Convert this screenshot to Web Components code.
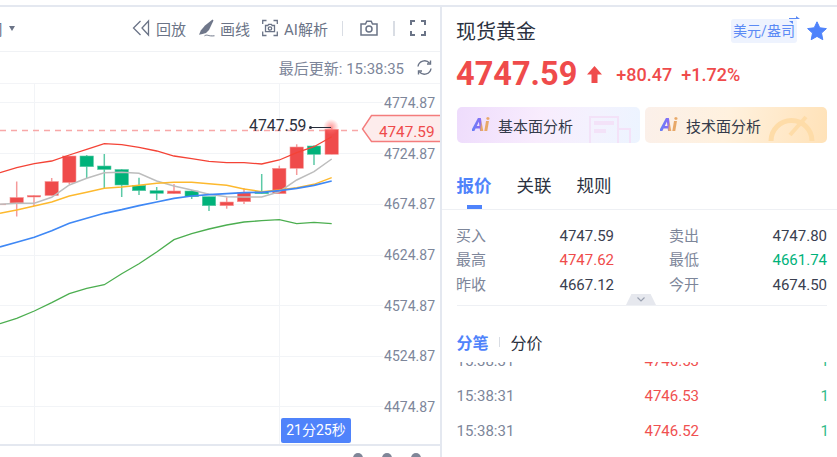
<!DOCTYPE html>
<html lang="zh"><head><meta charset="utf-8"><title>现货黄金</title>
<style>
html,body{margin:0;padding:0;background:#fff;overflow:hidden}
body{width:837px;height:457px;font-family:Roboto,"Noto Sans CJK SC",sans-serif}
</style></head><body>
<app-shell>
  <chart-pane slot="left">
    <chart-toolbar></chart-toolbar>
    <update-bar></update-bar>
    <kline-chart></kline-chart>
    <chart-foot></chart-foot>
  </chart-pane>
  <quote-pane slot="right">
    <quote-head></quote-head>
    <ai-row></ai-row>
    <tab-bar></tab-bar>
    <quote-table></quote-table>
    <trade-list></trade-list>
  </quote-pane>
</app-shell>
<script>
const FONT='Roboto,"Noto Sans CJK SC",sans-serif';
function def(name,css,html,after){
  customElements.define(name,class extends HTMLElement{
    constructor(){super();const s=this.attachShadow({mode:'open'});
      s.innerHTML='<style>'+css+'</style>'+html;if(after)after(s,this);}
  });
}
def('app-shell',
 `:host{display:block;width:837px;height:457px;overflow:hidden;font-family:${FONT};padding-top:5px;box-sizing:border-box}
  .strip{height:2px;background:#e4e8f0}
  .cols{display:grid;grid-template-columns:440px 397px;height:450px}`,
 `<div class="strip"></div><div class="cols"><slot name="left"></slot><slot name="right"></slot></div>`);
def('chart-pane',`:host{display:flex;flex-direction:column;height:450px;overflow:hidden}`,`<slot></slot>`);
def('chart-toolbar',
 `:host{display:flex;align-items:center;height:42px;padding-bottom:2px;border-bottom:1px solid #f0f2f5;color:#6b7487;font-size:15px;white-space:nowrap;overflow:hidden;flex:none}
  .period{margin-left:-12px;width:15px;overflow:hidden;font-size:15px;color:#6b7487}
  .tri{width:0;height:0;border:3.5px solid transparent;border-top:5px solid #6b7487;border-bottom:0;margin-left:6px;margin-right:117px}
  svg{display:block;flex:none}
  .t{display:block}
  .sep{width:1px;height:15px;background:#d9dde4;flex:none}`,
 `<span class="period">周期</span><i class="tri"></i>
  <svg width="18" height="18" viewBox="0 0 18 18" fill="none" stroke="#6b7487" stroke-width="1.3"><path d="M8.5 2 L1.5 9 L8.5 16"/><path d="M16.500 2 L10 9 L16.500 16 Z"/></svg>
  <span class="t" style="margin-left:6px">回放</span>
  <svg style="margin-left:12px" width="17" height="18" viewBox="0 0 17 18"><path d="M14.500 .5 L15.500 1.500 L11 11 L8 14 L4.500 15 L1 15.800 L2.800 11.500 L7 6.500 Z" fill="#6f778a"/><path d="M6.500 16.800 C10 15 9.500 17.500 16.500 16.800" fill="none" stroke="#6f778a" stroke-width="1"/></svg>
  <span class="t" style="margin-left:5px">画线</span>
  <svg style="margin-left:12px" width="16" height="18" viewBox="0 0 16 18" fill="none" stroke="#6b7487" stroke-width="1.3"><path d="M.7 5V1.500H4.500M11.500 1.500H15.300V5M.7 12.500V16.500H4.500M11.500 16.500H15.300V12.500"/><path d="M3.500 6.500H5.800L6.600 5.300H9.400L10.200 6.500H12.500V12.700H3.500Z"/><circle cx="8" cy="9.500" r="1.700"/></svg>
  <span class="t" style="margin-left:6px">AI解析</span>
  <i class="sep" style="margin-left:14px"></i>
  <svg style="margin-left:17px" width="18" height="16" viewBox="0 0 18 16" fill="none" stroke="#6b7487" stroke-width="1.5"><path d="M1 4H5.500L6.800 1.200H11.200L12.500 4H17V15H1Z"/><circle cx="9" cy="9" r="3"/></svg>
  <i class="sep" style="margin-left:15px;width:2px"></i>
  <svg style="margin-left:15px" width="16" height="16" viewBox="0 0 16 16" fill="none" stroke="#6b7487" stroke-width="2"><path d="M1 5V1H5M11 1H15V5M1 11V15H5M11 15H15V11"/></svg>`);
def('update-bar',
 `:host{display:flex;align-items:center;justify-content:flex-end;height:31px;border-bottom:1px solid #f3f4f7;color:#7d869a;font-size:15px;flex:none;padding-right:7px;box-sizing:content-box}
  svg{margin-left:12px;display:block}`,
 `<span>最后更新: 15:38:35</span>
  <svg width="17" height="17" viewBox="0 0 17 17" fill="none" stroke="#6b7487" stroke-width="1.400"><path d="M2 7.500A6.600 6.600 0 0 1 13.600 4.200"/><path d="M15 9.500A6.600 6.600 0 0 1 3.400 12.800"/><path d="M14.500 1.500V5H11"/><path d="M2.500 15.500V12H6"/></svg>`);
def('kline-chart',
 `:host{display:block;height:360px;flex:none;position:relative;overflow:hidden;font-family:Roboto,sans-serif}
  svg{display:block;position:absolute;left:0;top:0}
  text{font-family:Roboto,sans-serif}
  .cd{position:absolute;left:281px;top:334px;width:70px;height:25px;background:#4f83fb;border-radius:2px;color:#fff;font:14px/25px ${FONT};text-align:center;white-space:nowrap}`,
 `<svg id="c" width="440" height="360" viewBox="0 84 440 360"></svg><div class="cd">21分25秒</div>`,
 (s)=>{
  const z=a=>a.map(p=>(p[0]/3).toFixed(1)+','+(p[1]/3).toFixed(1)).join(' ');
  const xs=[0,50,103,155,208,260,313,365,417,470,522,575,627,680,732,785,838,890,942,995];
  const mk=ys=>z(xs.map((x,i)=>[x,ys[i]]));
  const red=[518,503,491,483,465,448,431,434,442,453,468,476,484,488,488,492,480,458,440,410];
  const gray=[613,610,610,592,555,535,518,517,520,543,558,570,583,590,591,591,575,540,515,477];
  const yel=[640,630,618,606,588,577,565,561,556,550,547,547,551,556,567,575,570,563,553,533];
  const blue=[741,727,712,692,670,655,640,629,617,606,595,588,584,581,578,577,572,565,556,543];
  const grn=[971,955,933,908,881,865,854,821,791,756,719,701,687,675,666,662,659,671,667,671];
  let h='';
  for(const y of [102.5,153.5,204.5,255.5,305.500,356.500,406.500]) h+=`<line x1="0" x2="383" y1="${y}" y2="${y}" stroke="#f2f4f7"/>`;
  for(const x of [34.5,279.5]) h+=`<line x1="${x}" x2="${x}" y1="84" y2="444" stroke="#f2f4f7"/>`;
  h+=`<line x1="0" x2="362" y1="130.500" y2="130.500" stroke="#f8a8a8" stroke-width="1.300" stroke-dasharray="6 5"/>`;
  const C=[
   [-1,204,204.8,204,205,1],[16.7,197.5,203,181.5,216.5,1],[34,195.5,197,195,206,1],[51.7,181.5,195.5,178,195.5,1],
   [69.3,156,182.5,156,184,1],[86.7,156,166.7,155,178,0],[104.3,166,169.5,154,188,0],[121.7,169.5,185,169,197,0],
   [139,185.3,190.7,177.7,195,0],[156.7,190.7,193.3,187,200,0],[174,191,193.7,184,194,1],[191.7,191,196.7,190,199,0],
   [209,196.7,205.7,196.7,211,0],[226.7,202,205.7,197.3,208.7,1],[244,192.700,201.700,188,204,1],[261.7,191.700,193.700,174,193.700,0],
   [279.3,168.300,193.700,165.700,194,1],[296.7,147,168.300,144.300,175,1],[314,146,154.300,145.300,165,0],[331.7,129.300,154.300,127.300,154.300,1]];
  for(const [x,t,b,wt,wb,up] of C){
    const col=up?'#ef4b4b':'#00b27a',lt=up?'#f59a9a':'#5cc9a6';
    h+=`<line x1="${x}" x2="${x}" y1="${wt}" y2="${wb}" stroke="${lt}" stroke-width="1.500"/>`;
    h+=`<rect x="${x-6.7}" y="${t}" width="13.400" height="${b-t}" fill="${col}" stroke="${lt}" stroke-width=".6"/>`;
  }
  const L=(ys,c,w)=>`<polyline points="${mk(ys)}" fill="none" stroke="${c}" stroke-width="${w}"/>`;
  h+=L(gray,'#bdbdbd',1.5)+L(yel,'#fdb92e',1.4)+L(blue,'#3f88f5',1.7)+L(grn,'#4cae50',1.3)+L(red,'#f44336',1.3);
  h+=`<defs><radialGradient id="g"><stop offset="0" stop-color="#f77" stop-opacity=".75"/><stop offset="1" stop-color="#f77" stop-opacity="0"/></radialGradient></defs><circle cx="331" cy="127" r="8" fill="url(#g)"/>`;
  h+=`<line x1="310" x2="331" y1="127.500" y2="127.500" stroke="#262c3a"/><circle cx="310.500" cy="127.500" r="1.500" fill="#262c3a"/>`;
  h+=`<text x="306.500" y="131" text-anchor="end" font-size="15.800" fill="#2b3140">4747.59</text>`;
  h+=`<path d="M441 115.500H371.500L362.500 129L371.500 141.500H441" fill="#fdecec" stroke="#f47c7c" stroke-width="1.400"/>`;
  h+=`<text x="434.500" y="137" text-anchor="end" font-size="15.300" fill="#ef4b4b">4747.59</text>`;
  for(const [y,t] of [[108,'4774.87'],[159,'4724.87'],[209,'4674.87'],[260,'4624.87'],[311,'4574.87'],[361,'4524.87'],[412,'4474.87']])
    h+=`<text x="435" y="${y}" text-anchor="end" font-size="14" fill="#7d869a">${t}</text>`;
  s.getElementById('c').innerHTML=h;
 });
def('chart-foot',
 `:host{display:block;flex:none;height:12px;border-top:2px solid #e4e8f0;box-sizing:content-box;overflow:hidden}
  .r{display:flex;gap:19px;padding:7px 0 0 353px}
  i{display:block;width:10px;height:10px;border-radius:50%;background:#7f8698}`,
 `<div class="r"><i></i><i></i><i></i></div>`);
def('quote-pane',
 `:host{display:flex;flex-direction:column;height:450px;border-left:2px solid #e4e8f0;box-sizing:border-box;overflow:hidden;color:#262c3a}`,`<slot></slot>`);
def('quote-head',
 `:host{display:block;padding:0 10px 0 14px;flex:none}
  .a{display:flex;align-items:center;height:48px}
  .title{font-size:20px;flex:1;color:#2b3140;position:relative;top:-1px}
  .badge{position:relative;width:66px;height:24px;line-height:24px;background:#eef3fe;border-radius:3px;color:#5b8af5;font-size:14px;text-align:center;margin-right:10px;white-space:nowrap}
  .sw{position:absolute;right:-3px;top:-3px;display:block}
  .star{display:block}
  .b{display:flex;align-items:center;height:38px;color:#ef4b4b}
  .p{font-size:32.500px;font-weight:700}
  .ar{margin-left:10px;display:block}
  .c{font-size:18px;font-weight:500;margin-left:14px}
  .d{font-size:18px;font-weight:500;margin-left:9px}`,
 `<div class="a"><span class="title">现货黄金</span>
   <span class="badge">美元/盎司<svg class="sw" width="11" height="8" viewBox="0 0 11 8" fill="#5b8af5"><path d="M0 2H7V0L11 3H0Z"/><path d="M11 5H4V8L0 5H11Z"/></svg></span>
   <svg class="star" width="20" height="20" viewBox="0 0 20 20"><path d="M10 .8L12.800 6.800L19.400 7.600L14.500 12.100L15.800 18.700L10 15.400L4.200 18.700L5.500 12.100L.6 7.600L7.200 6.800Z" fill="#4f83fb" stroke="#4f83fb" stroke-linejoin="round"/></svg></div>
  <div class="b"><span class="p">4747.59</span>
   <svg class="ar" width="15" height="17" viewBox="0 0 15 17" fill="#ef4b4b"><path d="M7.500 0L15 8.500H10.500V17H4.500V8.500H0Z"/></svg>
   <span class="c">+80.47</span><span class="d">+1.72%</span></div>`);
const AI=`.btn{position:relative;height:36px;border-radius:5px;display:flex;align-items:center;overflow:hidden;font-size:15px;color:#343a4a;white-space:nowrap}
  .logo{font:italic 900 18.500px/36px Roboto,sans-serif;margin-left:15px;width:26px;background:linear-gradient(100deg,#4f8cf8 0,#8a6cf5 11px,#e8a868 13px);-webkit-background-clip:text;background-clip:text;color:transparent}
  .deco{position:absolute;top:2px}`;
def('ai-row',
 `:host{display:grid;grid-template-columns:183px 182px;gap:5px;padding:14px 0 0 15px;flex:none}
  ${AI}
  .l{background:linear-gradient(100deg,#eedcfc 0%,#f8ecfd 45%,#f3f2fe 75%,#ecf4ff 100%)}
  .r{background:linear-gradient(100deg,#fbf0ea 0%,#fff1de 45%,#ffe2b8 100%)}`,
 `<div class="btn l"><span class="logo">Ai</span><span>基本面分析</span>
    <svg class="deco" style="right:-8px" width="62" height="34" viewBox="0 0 62 34" fill="none" stroke="#f3e2f8" stroke-width="2"><path d="M4 34V8H32V34"/><path d="M8 14H28M8 22H20" stroke-width="4"/><path d="M32 20H44V34"/></svg></div>
  <div class="btn r"><span class="logo">Ai</span><span>技术面分析</span>
    <svg class="deco" style="right:1px" width="62" height="34" viewBox="0 0 62 34" fill="none" stroke="#fedca8" stroke-width="5"><path d="M7 32A20 20 0 0 1 48 32"/><path d="M26 26L42 8" stroke-width="4"/></svg></div>`);
def('tab-bar',
 `:host{display:flex;flex:none;height:67px;border-bottom:1px solid #eef0f4;box-sizing:border-box;padding-left:14.500px;font-size:17.500px;color:#2b3140}
  .t{position:relative;width:35px;margin-right:25px;padding-top:30.500px;line-height:25px;white-space:nowrap}
  .on{color:#4f83fb;font-weight:700}
  .on::after{content:"";position:absolute;left:10.500px;width:15px;height:4px;bottom:0;background:#4f83fb}`,
 `<div class="t on">报价</div><div class="t">关联</div><div class="t">规则</div>`);
def('quote-table',
 `:host{display:block;position:relative;flex:none;margin:0 10px 0 15px;padding-top:13.750px;height:96px;box-sizing:border-box;border-bottom:1px solid #eef0f4;font-size:15px}
  .g{display:grid;grid-template-columns:157px 1fr;column-gap:56px}
  .c{display:flex;justify-content:space-between;height:24.500px;line-height:24.500px}
  .l{color:#7d869a;margin-left:-1px}.v{color:#3a4050}
  .up{color:#ef4b4b}.dn{color:#00b27a}
  .tab{position:absolute;left:169px;bottom:0;width:30px;height:11px;background:#e6e8ee;clip-path:polygon(18% 0,82% 0,100% 100%,0 100%)}
  .tab svg{position:absolute;left:11px;top:3px}`,
 `<div class="g">
   <div class="c"><span class="l">买入</span><span class="v">4747.59</span></div><div class="c"><span class="l">卖出</span><span class="v">4747.80</span></div>
   <div class="c"><span class="l">最高</span><span class="v up">4747.62</span></div><div class="c"><span class="l">最低</span><span class="v dn">4661.74</span></div>
   <div class="c"><span class="l">昨收</span><span class="v">4667.12</span></div><div class="c"><span class="l">今开</span><span class="v">4674.50</span></div>
  </div><div class="tab"><svg width="8" height="5" viewBox="0 0 8 5" fill="none" stroke="#9aa1b0" stroke-width="1.200"><path d="M.5 .5L4 4L7.500 .5"/></svg></div>`);
def('trade-list',
 `:host{display:block;flex:none;padding:0 10px 0 14.500px}
  .tabs{display:flex;align-items:center;height:56px;padding-top:16px;box-sizing:border-box;font-size:16px;color:#2b3140}
  .on{color:#4f83fb;font-weight:700}
  .s{width:1px;height:10px;background:#d9dde4;margin:0 10.500px}
  .w{height:90px;overflow:hidden}
  .in{margin:-18.500px -2px 0 0}
  .r{display:grid;grid-template-columns:55px 187.500px 1fr;height:35px;line-height:35px;font-size:15px;color:#7d869a;white-space:nowrap}
  .p{text-align:right;color:#f05050}.q{text-align:right;color:#33bb8a;overflow:hidden}`,
 `<div class="tabs"><span class="on">分笔</span><i class="s"></i><span>分价</span></div>
  <div class="w"><div class="in">
   <div class="r"><span>15:38:31</span><span class="p">4746.53</span><span class="q">1</span></div>
   <div class="r"><span>15:38:31</span><span class="p">4746.53</span><span class="q">1</span></div>
   <div class="r"><span>15:38:31</span><span class="p">4746.52</span><span class="q">1</span></div>
  </div></div>`);
</script>
</body></html>
